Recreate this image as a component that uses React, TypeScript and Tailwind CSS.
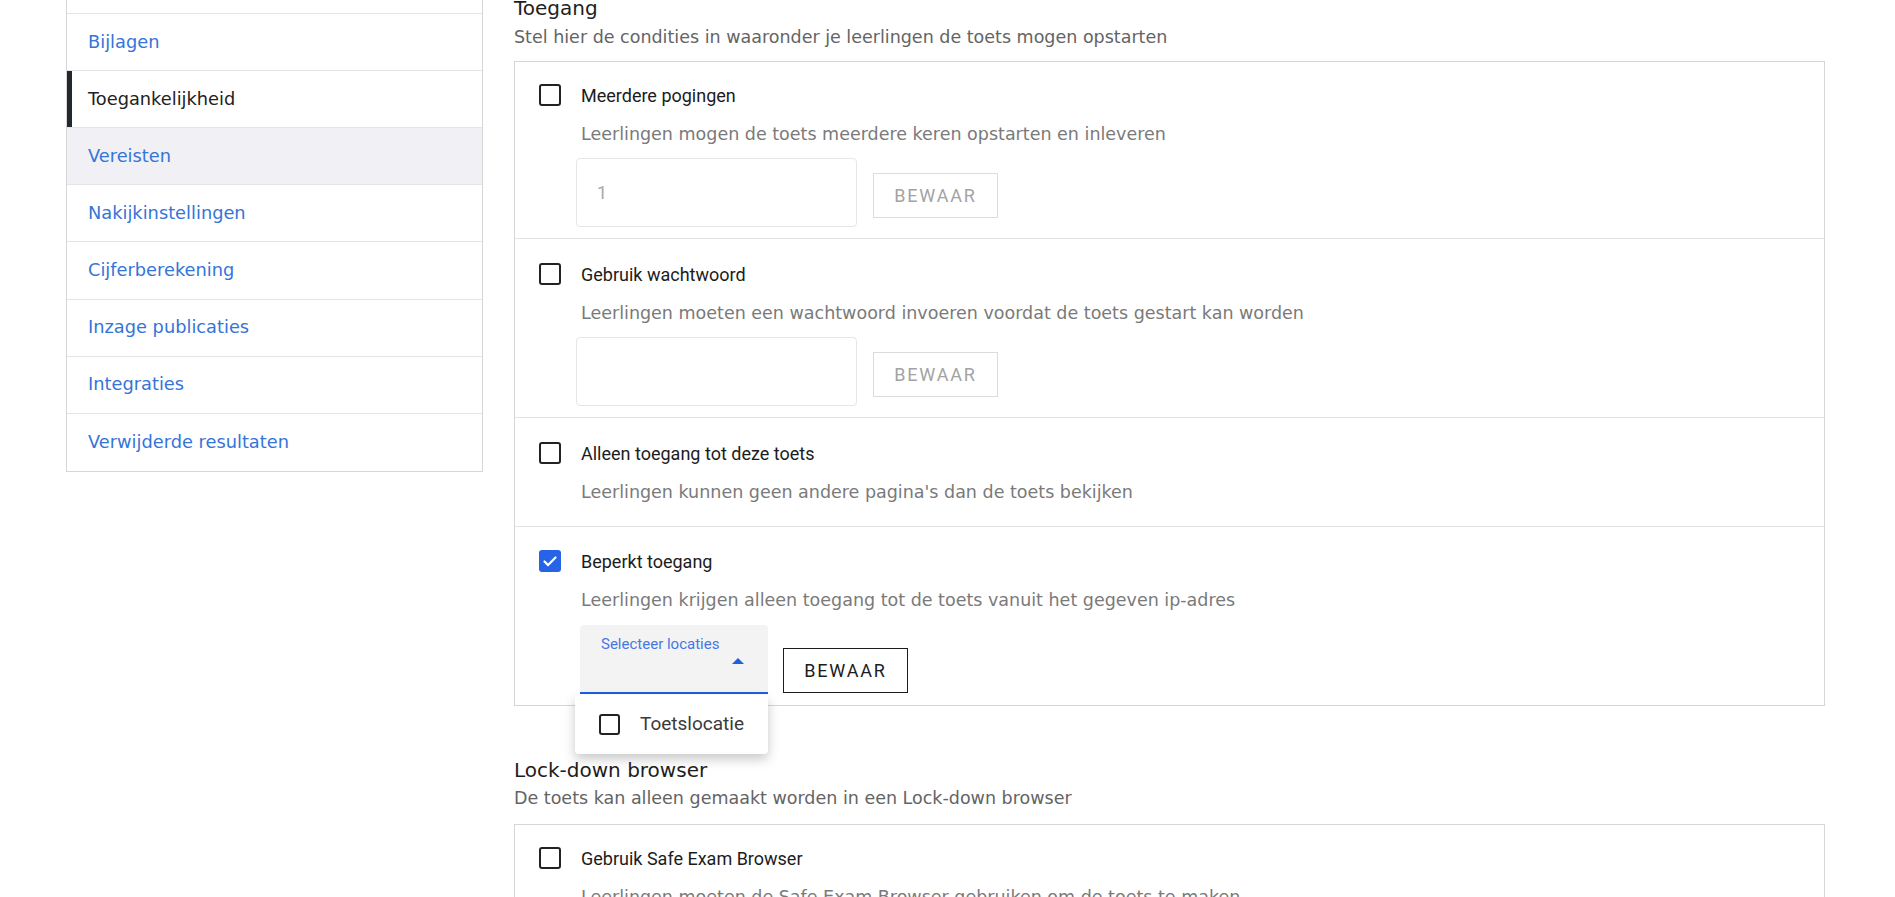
import React from "react";

const NAV_ITEMS = [
  "Algemeen",
  "Bijlagen",
  "Toegankelijkheid",
  "Vereisten",
  "Nakijkinstellingen",
  "Cijferberekening",
  "Inzage publicaties",
  "Integraties",
  "Verwijderde resultaten",
];

function Checkbox({ checked = false, small = false }: { checked?: boolean; small?: boolean }) {
  const size = small ? "w-[21px] h-[21px]" : "w-[22px] h-[22px]";
  if (checked) {
    return (
      <span className={`${size} flex items-center justify-center rounded-[3px] bg-[#2763e6]`}>
        <svg viewBox="0 0 22 22" className="w-[22px] h-[22px]" fill="none">
          <path d="M5.5 11.5l3.6 3.6 7.4-7.6" stroke="white" strokeWidth="2.2" strokeLinecap="round" strokeLinejoin="round" />
        </svg>
      </span>
    );
  }
  return <span className={`${size} block rounded-[3px] border-2 border-[#222]`} />;
}

function Sidebar() {
  return (
    <nav className="w-[417px] shrink-0 self-start -mt-[44px] border border-[#d6d6d9] bg-white">
      {NAV_ITEMS.map((item) => {
        const active = item === "Toegankelijkheid";
        const hovered = item === "Vereisten";
        return (
          <div
            key={item}
            className={`relative flex h-[57.1px] items-center border-b border-[#e3e3e8] pl-[21px] text-[17.8px] last:border-b-0 ${
              hovered ? "bg-[#f0f0f5]" : ""
            } ${active ? "text-[#222]" : "text-[#3574d8]"}`}
          >
            {active && <span className="absolute left-0 top-0 bottom-0 w-[5px] bg-[#23282c]" />}
            {item}
          </div>
        );
      })}
    </nav>
  );
}

interface OptionRowProps {
  label: string;
  description: string;
  checked?: boolean;
  className?: string;
  children?: React.ReactNode;
}

function OptionRow({ label, description, checked, className = "", children }: OptionRowProps) {
  return (
    <div className={`flex pl-6 ${className}`}>
      <div className="w-[42px] shrink-0">
        <Checkbox checked={checked} />
      </div>
      <div className="flex-1">
        <div className="flex h-[22px] items-center font-['Roboto',sans-serif] text-[18px] text-[#1c1c1c]">{label}</div>
        <p className="mt-4 h-6 leading-6 text-[17.5px] text-[#7a7a7a]">{description}</p>
        {children}
      </div>
    </div>
  );
}

function SaveButton({ disabled = false, className = "" }: { disabled?: boolean; className?: string }) {
  return (
    <button
      className={`flex h-[45px] w-[125px] items-center justify-center border font-['Roboto',sans-serif] text-[18px] tracking-[0.1em] ${
        disabled ? "border-[#dcdcdc] text-[#a3a3a3]" : "border-[#1c1c1c] text-[#1c1c1c]"
      } ${className}`}
    >
      BEWAAR
    </button>
  );
}

function TextField({ value }: { value?: string }) {
  return (
    <div className="flex h-[69px] w-[281px] items-center rounded-[4px] border border-[#e6e6e6] pl-5 font-['Roboto',sans-serif] text-[18px] text-[#a8a8a8]">
      {value}
    </div>
  );
}

function LocationSelect() {
  return (
    <div className="relative">
      <div className="relative h-[69px] w-[188px] rounded-t-[4px] border-b-2 border-[#1f5fe3] bg-[#f3f3f3]">
        <span className="absolute left-[21px] top-[10px] font-['Roboto',sans-serif] text-[15px] leading-[18px] text-[#4677e6]">
          Selecteer locaties
        </span>
        <span className="absolute right-[24px] top-[33px] h-0 w-0 border-b-[6px] border-l-[6px] border-r-[6px] border-b-[#1f5fe3] border-l-transparent border-r-transparent" />
      </div>
      {/* open menu */}
      <div className="absolute left-[-5px] top-[70px] z-10 flex h-[59px] w-[193px] items-center rounded-[4px] bg-white pl-6 shadow-[0_5px_12px_rgba(0,0,0,0.22)]">
        <Checkbox small />
        <span className="ml-5 font-['Roboto',sans-serif] text-[19px] text-[#3a3a3a]">Toetslocatie</span>
      </div>
    </div>
  );
}

export default function App() {
  return (
    <div className="flex h-screen overflow-hidden bg-white pl-[66px] font-['DejaVu_Sans',sans-serif]">
      <Sidebar />

      <main className="ml-[31px] w-[1311px] shrink-0 -mt-[6px]">
        <h2 className="h-7 text-[20px] leading-7 text-[#1e1e1e]">Toegang</h2>
        <p className="mt-[3px] h-6 text-[17.5px] leading-6 text-[#646464]">
          Stel hier de condities in waaronder je leerlingen de toets mogen opstarten
        </p>

        <div className="mt-3 divide-y divide-[#e3e3e3] border border-[#d6d6d6]">
          <OptionRow
            className="pt-[22px] pb-[11px]"
            label="Meerdere pogingen"
            description="Leerlingen mogen de toets meerdere keren opstarten en inleveren"
          >
            <div className="-ml-[5px] mt-3 flex items-center gap-4">
              <TextField value="1" />
              <SaveButton disabled className="mt-[6px]" />
            </div>
          </OptionRow>

          <OptionRow
            className="pt-6 pb-[11px]"
            label="Gebruik wachtwoord"
            description="Leerlingen moeten een wachtwoord invoeren voordat de toets gestart kan worden"
          >
            <div className="-ml-[5px] mt-3 flex items-center gap-4">
              <TextField />
              <SaveButton disabled className="mt-[6px]" />
            </div>
          </OptionRow>

          <OptionRow
            className="pt-6 pb-[22px]"
            label="Alleen toegang tot deze toets"
            description="Leerlingen kunnen geen andere pagina's dan de toets bekijken"
          />

          <OptionRow
            className="pt-[23px] pb-[11px]"
            checked
            label="Beperkt toegang"
            description="Leerlingen krijgen alleen toegang tot de toets vanuit het gegeven ip-adres"
          >
            <div className="-ml-px mt-[13px] flex items-end gap-[15px]">
              <LocationSelect />
              <SaveButton className="mb-px w-[124px]" />
            </div>
          </OptionRow>
        </div>

        <h2 className="mt-[50px] h-7 text-[20px] leading-7 text-[#1e1e1e]">Lock-down browser</h2>
        <p className="mt-[2px] h-6 text-[17.5px] leading-6 text-[#646464]">
          De toets kan alleen gemaakt worden in een Lock-down browser
        </p>

        <div className="mt-[14px] border border-[#d6d6d6]">
          <OptionRow
            className="pt-[22px] pb-6"
            label="Gebruik Safe Exam Browser"
            description="Leerlingen moeten de Safe Exam Browser gebruiken om de toets te maken"
          />
        </div>
      </main>
    </div>
  );
}
